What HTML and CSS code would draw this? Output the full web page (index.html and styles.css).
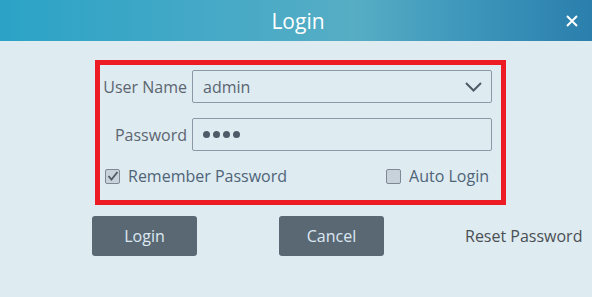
FILE: index.html
```html
<!DOCTYPE html>
<html lang="en">
<head>
    <meta charset="UTF-8">
    <title>Login</title>
    <link rel="stylesheet" href="styles.css">
</head>
<body>
    <div class="dialog">
        <div class="header">
            <span></span>
            <div class="title">Login</div>
            <div class="close">
                <svg width="12" height="12" viewBox="0 0 12 12">
                    <path d="M1 1 L11 11 M11 1 L1 11" stroke="#fff" stroke-width="2" fill="none"/>
                </svg>
            </div>
        </div>

        <div class="content">
            <div class="login-box">
                <div class="field">
                    <div class="label">User Name</div>
                    <div class="input select">
                        <span>admin</span>
                        <svg width="17" height="10" viewBox="0 0 17 10">
                            <path d="M1 1 L8.5 8.5 L16 1" stroke="#4f5a66" stroke-width="2" fill="none"/>
                        </svg>
                    </div>
                </div>
                <div class="field">
                    <div class="label">Password</div>
                    <div class="input">
                        <div class="dots"><i></i><i></i><i></i><i></i></div>
                    </div>
                </div>
                <div class="options">
                    <div class="check">
                        <span class="box">
                            <svg width="12" height="12" viewBox="0 0 12 12">
                                <path d="M1.5 6 L4.5 9.5 L10.5 2" stroke="#4f5a66" stroke-width="1.8" fill="none"/>
                            </svg>
                        </span>
                        Remember Password
                    </div>
                    <div class="check">
                        <span class="box"></span>
                        Auto Login
                    </div>
                </div>
            </div>

            <!-- buttons -->
            <div class="actions">
                <button class="btn">Login</button>
                <button class="btn">Cancel</button>
                <a class="reset">Reset Password</a>
            </div>
        </div>
    </div>
</body>
</html>
```

FILE: styles.css
```css
body {
    margin: 0;
    font-family: "Open Sans", "Noto Sans", sans-serif;
    background-color: #deebf0;
}

.dialog {
    width: 592px;
    height: 297px;
    background-color: #deebf0;
}

.header {
    height: 41px;
    display: grid;
    grid-template-columns: 1fr auto 1fr;
    align-items: center;
    background: linear-gradient(to right, #2ba3c6 0%, #45a9c7 35%, #56adc4 60%, #3c95bb 80%, #2a7fac 100%);
}

.title {
    color: #ffffff;
    font-size: 21px;
    padding-left: 4px;
}

.close {
    justify-self: end;
    margin-right: 14px;
    display: flex;
}

.content {
    padding: 19px 0 0 95px;
}

.login-box {
    width: 401px;
    height: 130px;
    border: 5px solid #ed1c24;
    padding-top: 5px;
    display: flex;
    flex-direction: column;
    gap: 15px;
}

.field {
    display: flex;
    align-items: center;
    gap: 5px;
}

.label {
    width: 87px;
    text-align: right;
    font-size: 16px;
    color: #5d6570;
}

.input {
    width: 300px;
    height: 33px;
    box-sizing: border-box;
    border: 1px solid #8c99a5;
    border-radius: 2px;
    display: flex;
    align-items: center;
    justify-content: space-between;
    padding: 0 9px 0 10px;
    font-size: 16px;
    color: #5a6571;
}

.dots {
    display: flex;
    gap: 3px;
}

.dots i {
    width: 7px;
    height: 7px;
    border-radius: 50%;
    background-color: #4f5b68;
}

.options {
    display: flex;
    justify-content: space-between;
    padding: 1px 12px 0 5px;
    margin-top: -2px;
}

.check {
    display: flex;
    align-items: center;
    gap: 8px;
    font-size: 16px;
    color: #4f6478;
}

.box {
    width: 15px;
    height: 15px;
    box-sizing: border-box;
    border: 1px solid #7d8a96;
    border-radius: 2px;
    background-color: #c7d2da;
    display: flex;
    align-items: center;
    justify-content: center;
}

.actions {
    display: flex;
    align-items: center;
    margin: 11px 0 0 -3px;
}

.btn {
    width: 105px;
    height: 40px;
    border: none;
    border-radius: 3px;
    background-color: #5a6874;
    color: #dce8f2;
    font-family: "Open Sans", "Noto Sans", sans-serif;
    font-size: 16px;
    cursor: pointer;
    margin-right: 82px;
}

.btn + .btn {
    margin-right: 81px;
}

.reset {
    font-size: 16px;
    color: #4a4f55;
    cursor: pointer;
}
```
